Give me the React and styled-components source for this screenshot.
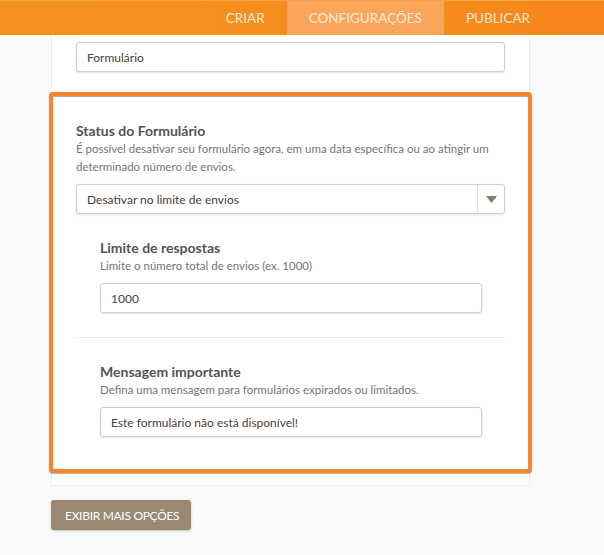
import React from "react";
import styled, { createGlobalStyle } from "styled-components";

const Global = createGlobalStyle`
  html, body { margin: 0; padding: 0; background: #fafafa; }
  body { font-family: Lato, "Open Sans", sans-serif; }
  * { box-sizing: border-box; }
`;

const Page = styled.div`
  width: 604px;
  height: 555px;
  overflow: hidden;
  background: #fafafa;
`;

const Header = styled.div`
  height: 35px;
  display: flex;
  justify-content: flex-end;
  padding-right: 52px;
  background: linear-gradient(90deg, #f5921f 0%, #f68d1c 60%, #f8851a 100%);
  border-top: 1px solid #f7a04a;
`;

const Tab = styled.div`
  height: 34px;
  line-height: 34px;
  padding: 0 22px;
  font-size: 13.5px;
  color: rgba(255, 244, 230, 0.92);
  text-transform: uppercase;
  white-space: nowrap;
  background: ${(p) => (p.$active ? "#f9a65a" : "transparent")};
`;

const Panel = styled.div`
  margin-left: 51px;
  width: 479px;
  background: #fff;
  border: 1px solid #ececec;
  border-top: none;
  padding: 7px 24px 12px;
`;

const TextInput = styled.input`
  display: block;
  width: 100%;
  height: 30px;
  padding: 0 10px;
  border: 1px solid #cfcfcf;
  border-radius: 3px;
  background: #fff;
  box-shadow: 0 1px 2px rgba(0, 0, 0, 0.12);
  font-family: Lato, "Open Sans", sans-serif;
  font-size: 12px;
  color: #4d4035;
  outline: none;
`;

const TopInput = styled(TextInput)`
  margin-bottom: 20px;
`;

const FocusBox = styled.div`
  margin: 0 -27px;
  border: 4px solid #f5862f;
  border-radius: 4px;
  background: #fff;
  padding: 26px 23px 8px;
  box-shadow: inset 0 1px 1px rgba(0, 0, 0, 0.35), 0 1px 1px rgba(0, 0, 0, 0.3);
`;

const Title = styled.div`
  font-size: 14px;
  font-weight: 700;
  line-height: 18px;
  color: #545454;
`;

const Desc = styled.div`
  font-size: 11.5px;
  line-height: 18px;
  color: #757575;
`;

const SelectBox = styled.div`
  margin-top: 8px;
  height: 30px;
  display: flex;
  align-items: stretch;
  border: 1px solid #cfcfcf;
  border-radius: 3px;
  background: #fff;
  box-shadow: 0 1px 2px rgba(0, 0, 0, 0.12);
`;

const SelectValue = styled.div`
  flex: 1;
  display: flex;
  align-items: center;
  padding-left: 10px;
  font-size: 12px;
  color: #4d4035;
`;

const SelectArrow = styled.div`
  width: 27px;
  display: flex;
  align-items: center;
  justify-content: center;
  border-left: 1px solid #e6e0d8;
`;

const SubSection = styled.div`
  padding: 25px 23px 24px 24px;
  border-bottom: ${(p) => (p.$last ? "none" : "1px solid #ebebeb")};
`;

const FieldInput = styled(TextInput)`
  margin-top: 8px;
`;

const MoreButton = styled.button`
  display: block;
  margin: 14px 0 0 51px;
  height: 30px;
  width: 140px;
  padding: 0 0 0 14px;
  text-align: left;
  white-space: nowrap;
  border: none;
  border-radius: 3px;
  background: #9a8873;
  color: #fff;
  font-family: Lato, "Open Sans", sans-serif;
  font-size: 12px;
  letter-spacing: -0.3px;
  text-transform: uppercase;
  box-shadow: 0 1px 3px rgba(0, 0, 0, 0.2);
  cursor: pointer;
`;

export default function App() {
  return (
    <Page>
      <Global />
      <Header>
        <Tab>Criar</Tab>
        <Tab $active>Configurações</Tab>
        <Tab>Publicar</Tab>
      </Header>
      <Panel>
        <TopInput readOnly value="Formulário" />
        <FocusBox>
          <Title>Status do Formulário</Title>
          <Desc>
            É possível desativar seu formulário agora, em uma data específica ou ao atingir um
            determinado número de envios.
          </Desc>
          <SelectBox>
            <SelectValue>Desativar no limite de envios</SelectValue>
            <SelectArrow>
              <svg width="11" height="7" viewBox="0 0 11 7">
                <path d="M0 0 H11 L5.5 7 Z" fill="#8c7b63" />
              </svg>
            </SelectArrow>
          </SelectBox>
          <SubSection>
            <Title>Limite de respostas</Title>
            <Desc>Limite o número total de envios (ex. 1000)</Desc>
            <FieldInput readOnly value="1000" />
          </SubSection>
          <SubSection $last>
            <Title>Mensagem importante</Title>
            <Desc>Defina uma mensagem para formulários expirados ou limitados.</Desc>
            <FieldInput readOnly value="Este formulário não está disponível!" />
          </SubSection>
        </FocusBox>
      </Panel>
      <MoreButton>Exibir mais opções</MoreButton>
    </Page>
  );
}
